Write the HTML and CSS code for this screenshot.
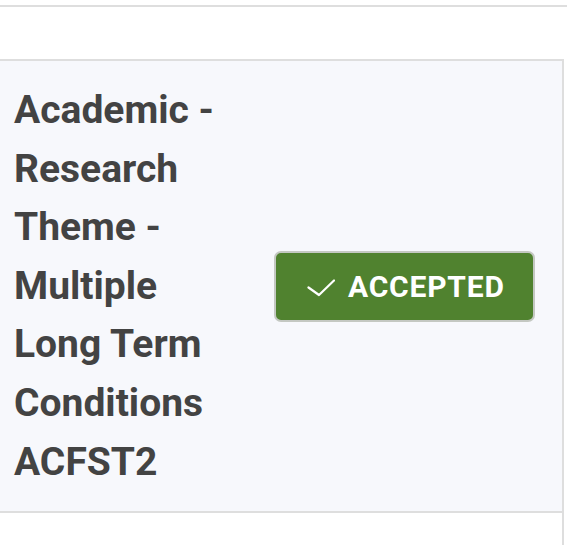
FILE: index.html
```html
<!DOCTYPE html>
<html lang="en">
<head>
<meta charset="utf-8">
<title>Accepted</title>
<link rel="stylesheet" href="styles.css">
</head>
<body>
<div class="table">
  <div class="row-head"></div>
  <div class="row-empty"></div>
  <div class="row-card">
    <div class="cell-title">Academic - Research Theme - Multiple Long Term Conditions ACFST2</div>
    <div class="cell-status">
      <span class="badge">
        <svg class="check" width="28" height="18" viewBox="0 0 28 18" aria-hidden="true">
          <polyline points="1.5,8.5 12,16 27,1.5" fill="none" stroke="#ffffff" stroke-width="2.2" stroke-linecap="round" stroke-linejoin="round"/>
        </svg>
        <span class="badge-text">ACCEPTED</span>
      </span>
    </div>
  </div>
  <div class="row-after"></div>
</div>
</body>
</html>
```

FILE: styles.css
```css
html, body {
  margin: 0;
  padding: 0;
  background: #ffffff;
}

body {
  font-family: Roboto, "Liberation Sans", sans-serif;
  width: 567px;
  height: 545px;
  overflow: hidden;
}

.table {
  display: flex;
  flex-direction: column;
  width: 567px;
}

.row-head {
  height: 5px;
  border-bottom: 2px solid #dedede;
}

.row-empty {
  height: 52px;
}

.row-card {
  width: 562px;
  display: flex;
  align-items: center;
  background: #f7f8fc;
  border-top: 2px solid #dedede;
  border-right: 2px solid #dedede;
  border-bottom: 2px solid #dedede;
  box-sizing: content-box;
}

.cell-title {
  width: 233px;
  padding: 20px 14px 20px 14px;
  font-size: 39px;
  font-weight: 700;
  line-height: 58.6px;
  color: #434343;
}

.cell-status {
  flex: 1;
  display: flex;
  align-items: center;
  padding-left: 13px;
}

.badge {
  display: inline-flex;
  align-items: center;
  justify-content: flex-start;
  box-sizing: border-box;
  width: 261px;
  height: 71px;
  gap: 13px;
  padding: 2px 0 0 31px;
  background: #50822f;
  border: 2px solid #c4c8c2;
  border-radius: 7px;
  color: #ffffff;
}

.check {
  display: block;
  margin-top: 2px;
}

.badge-text {
  font-size: 30px;
  font-weight: 700;
  letter-spacing: 0.8px;
  line-height: 1;
}

.row-after {
  width: 562px;
  height: 40px;
  border-right: 2px solid #dedede;
}
```
